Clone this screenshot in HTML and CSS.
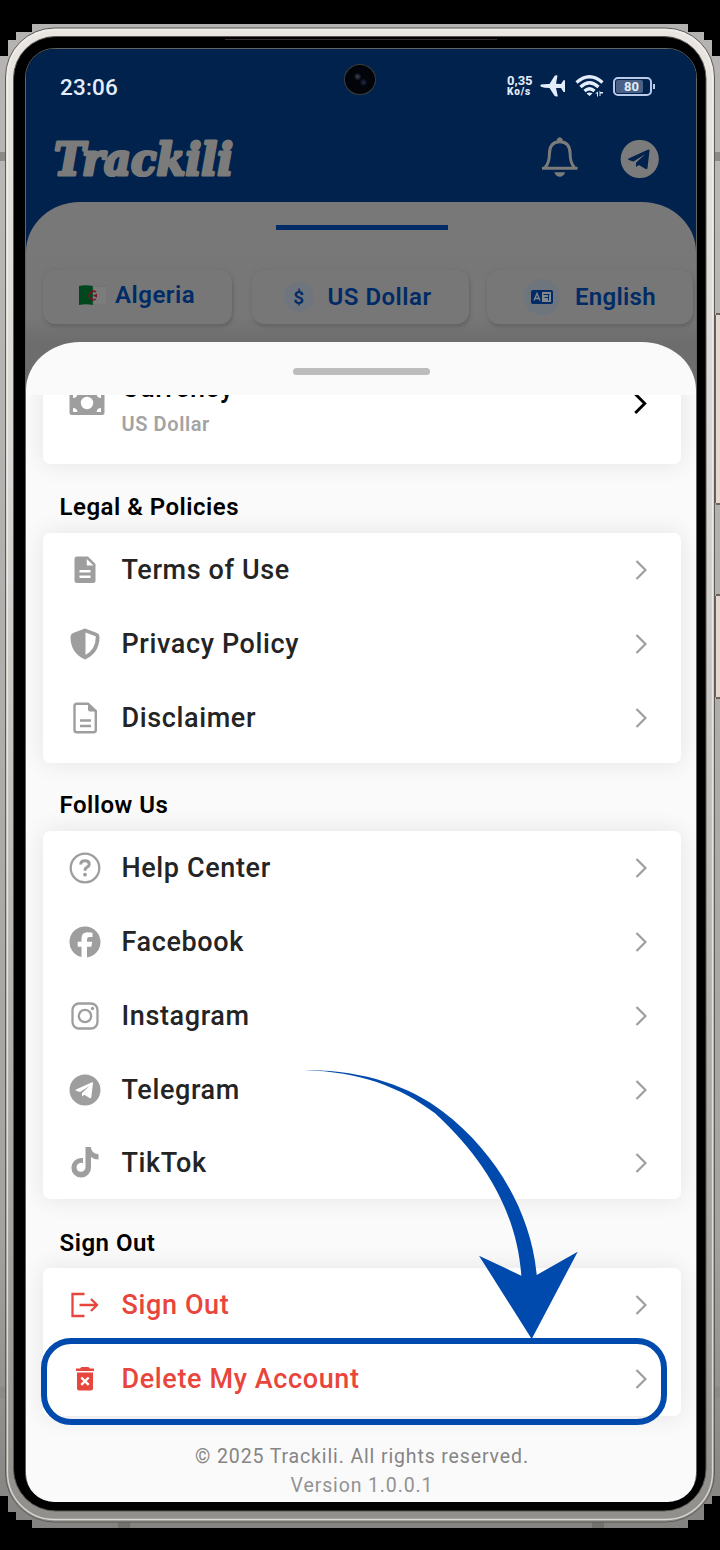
FILE: index.html
```html
<!DOCTYPE html>
<html lang="en">
<head>
<meta charset="utf-8">
<title>Trackili</title>
<link rel="stylesheet" href="styles.css">
</head>
<body>
<svg width="0" height="0" class="defs">
  <symbol id="chev" viewBox="0 0 12 20"><path d="M1.500 1l9 9-9 9" fill="none" stroke="currentColor"/></symbol>
  <symbol id="telegram" viewBox="0 0 32 32"><path fill-rule="evenodd" fill="currentColor" d="M16 .5a15.500 15.500 0 1 0 0 31a15.500 15.500 0 1 0 0-31zM24 8.800L22.300 23.300Q22 25 20.500 24L15.300 20.800L13 22.500L13 19L20.500 12L11 18L7 16.800Q5.800 16.200 7 15.500L22.500 8.500Q24 7.900 24 8.800z"/></symbol>
</svg>
<div class="stage">
  <svg class="frame" viewBox="0 0 720 1550">
    <defs>
      <linearGradient id="back" x2="0" y2="1"><stop offset="0" stop-color="#b5b3b1"/><stop offset=".12" stop-color="#bab8b6"/><stop offset=".8" stop-color="#a5a3a0"/><stop offset="1" stop-color="#858381"/></linearGradient>
      <linearGradient id="metal" x2="0" y2="1"><stop offset="0" stop-color="#e9e6e2"/><stop offset=".3" stop-color="#d8d6d2"/><stop offset="1" stop-color="#918f8b"/></linearGradient>
    </defs>
    <path fill="url(#back)" d="M32 24H688V32H704V40H712V56H720V1496H712V1504H704V1520H688V1528H32V1520H16V1512H8V1496H0V56H8V40H16V32H32z"/>
    <path fill="#8d8b87" d="M0 152h6v9H0zM714 152h6v9h-6zM0 1387h6v11H0zM714 1387h6v11h-6z"/>
    <path fill="#73716e" d="M118 1521h12v7h-12zM592 1521h12v7h-12z"/>
    <path fill="#e4d8cf" d="M716 315h4v188h-4zM716 596h4v101h-4z"/>
    <path fill="#6b625a" d="M716 313h4v2h-4zM716 503h4v2h-4zM716 594h4v2h-4zM716 697h4v2h-4zM715 315h1v188h-1zM715 596h1v101h-1z"/>
    <rect x="5.500" y="28" width="709" height="1494" rx="49" fill="url(#metal)" stroke="#5d5a57"/>
    <rect x="7.500" y="30" width="705" height="1489.500" rx="47" fill="none" stroke="#f1efec" stroke-opacity=".75" stroke-width="1.300"/>
    <rect x="13.500" y="36.500" width="692.500" height="1474.500" rx="42" fill="#000" stroke="#5b5652"/>
    <rect x="25.500" y="48.500" width="671" height="1453" rx="29" fill="none" stroke="#626562"/>
    <path d="M225 39.500h272" stroke="#382d28"/>
  </svg>
  <main class="screen">
    <header class="top">
      <div class="status">
        <span class="time">23:06</span>
        <div class="sys">
          <div class="rate"><span>0,35</span><b>Ko/s</b></div>
          <svg class="plane" viewBox="0 0 26 22"><path fill="#e3edfb" d="M1 9.500Q5 8.800 9.500 9L14.500 1Q15.500-.3 17.500.5L16 8.800L21 9L23.500 5.300H25V17H23.500L21 13L16 13L17.800 21.300Q16 22 14.500 20.800L9.500 13Q4 13 1 11.800Q-.2 10.500 1 9.500z"/></svg>
          <svg class="wifi" viewBox="0 0 30 22"><g fill="none" stroke="#e3edfb" stroke-width="3.200"><path d="M1.500 7.500Q14.500-4 27.500 7.500"/><path d="M5.500 12Q14.500 3.500 23.500 12"/><path d="M9.500 16Q14.500 11.500 19.500 16"/></g><path fill="#e3edfb" d="M11.500 18.500q3-2 6 0l-3 2.500zM20 18.500l3-2v5h-1v-3zM24.500 15.500v5.500h1v-2.500h2.500v-1.500h-2.500z"/></svg>
          <span class="batt"><i>80</i></span>
        </div>
      </div>
      <div class="brandrow">
        <svg class="logo" viewBox="0 0 184 60"><text x="2" y="46" textLength="179" lengthAdjust="spacingAndGlyphs">Trackili</text></svg>
        <svg class="bell" viewBox="0 0 36 42"><g fill="none" stroke="#7b7b7b" stroke-width="3"><path d="M0 32.500H36"/><path d="M3 32Q7.500 27 7.500 18Q7.500 5.500 18 5.500T28.500 18Q28.500 27 33 32"/></g><path fill="#7b7b7b" d="M15 5V3q3-4 6 0v2zM12.500 36.500h11q-1.500 4.500-5.500 4.500t-5.500-4.500z"/></svg>
        <svg class="tg"><use href="#telegram"/></svg>
      </div>
    </header>
    <section class="home">
      <div class="tab"></div>
      <div class="chips">
        <div class="chip c1">
          <svg class="flag" viewBox="0 0 28 20"><path fill="#00471f" d="M0 1Q7-.5 14 1V20Q7 18.500 0 20z"/><path fill="#7c7c7c" stroke="#6b6b6b" stroke-width=".5" d="M14 1q7 1 14 0v19q-7 .5-14 0z"/><path fill="none" stroke="#7d1019" stroke-width="1.500" d="M17 7a4.300 4.300 0 1 0 0 7"/><path fill="#7d1019" d="M14 10.500l4-1.800v4z"/></svg><span>Algeria</span>
        </div>
        <div class="chip c2"><span class="disc">$</span><span>US Dollar</span></div>
        <div class="chip c3"><span class="disc"><svg viewBox="0 0 22 14"><rect width="22" height="14" rx="2" fill="#002b66"/><path fill="none" stroke="#85898e" stroke-width="1.300" d="M3 10.500l3-7 3 7M4 8.500h4"/><path fill="#85898e" d="M11 2h9v10h-9z"/><path fill="none" stroke="#002b66" stroke-width="1" d="M12.500 4.500h6M17.500 4.500v3h-4M17.500 7v3.500"/></svg></span><span>English</span></div>
      </div>
    </section>
    <section class="sheet">
      <div class="grip"></div>
      <div class="scroll">
        <div class="card currency">
          <svg class="cash" viewBox="0 0 36 26"><rect x=".5" y="0" width="35" height="25" rx="2.500" fill="#9e9e9e"/><circle cx="18" cy="13" r="6.200" fill="#fff"/><path fill="#fff" d="M4 8V4h4.500Q8 8 4 8zM32 8V4h-4.500q.5 4 4.500 4zM4 18v4h4.500Q8 18 4 18zM32 18v4h-4.500q.5-4 4.500-4z"/></svg>
          <div class="words"><span class="cur">Currency</span><span class="sub">US Dollar</span></div>
          <svg class="chev dark"><use href="#chev"/></svg>
        </div>
        <h2>Legal &amp; Policies</h2>
        <div class="card legal">
          <div class="row"><svg class="ic" viewBox="0 0 32 32"><path fill="#9e9e9e" fill-rule="evenodd" d="M8 2.500H19L26.500 10V26.500Q26.500 29 24 29H8Q5.500 29 5.500 26.500V5Q5.500 2.500 8 2.500zM17.800 5V11.500H24.500zM10.500 16v2.400h11V16zM10.500 21.500v2.400h11v-2.400z"/></svg><span>Terms of Use</span><svg class="chev"><use href="#chev"/></svg></div>
          <div class="row"><svg class="ic" viewBox="0 0 32 32"><path fill="#9e9e9e" fill-rule="evenodd" d="M16 .5L28 5Q30.500 6 30.500 9Q30.500 25 16 31.500Q1.500 25 1.500 9Q1.500 6 4 5zM16.500 4.500V27Q26.800 21 26.800 9Q26.800 8.200 26 8z"/></svg><span>Privacy Policy</span><svg class="chev"><use href="#chev"/></svg></div>
          <div class="row"><svg class="ic" viewBox="0 0 32 32"><path fill="none" stroke="#9e9e9e" stroke-width="2.400" d="M19 1.700H8Q5.500 1.700 5.500 4V28Q5.500 30.300 8 30.300H24.500Q26.800 30.300 26.800 28V9zM11 18.500H22M11 24H22"/><path fill="#9e9e9e" d="M19 1L27.500 9.500H21Q19 9.500 19 7.500z"/></svg><span>Disclaimer</span><svg class="chev"><use href="#chev"/></svg></div>
        </div>
        <h2 class="follow">Follow Us</h2>
        <div class="card social">
          <div class="row"><svg class="ic" viewBox="0 0 32 32"><circle cx="16" cy="16" r="14.300" fill="none" stroke="#9e9e9e" stroke-width="2.300"/><path fill="none" stroke="#9e9e9e" stroke-width="3" d="M11.700 12.500Q11.800 8.800 16 8.800T20.300 12.300Q20.300 14 18 15.200Q16 16.300 16 18.800"/><circle cx="16" cy="22.700" r="1.900" fill="#9e9e9e"/></svg><span>Help Center</span><svg class="chev"><use href="#chev"/></svg></div>
          <div class="row"><svg class="ic" viewBox="0 0 32 32"><path fill="#9e9e9e" d="M31.500 16a15.500 15.500 0 1 0-19 15.100V20.800H8.700V15.800H12.500V12.500Q12.500 6.300 18.500 6.300Q20.800 6.300 23.500 6.800V11H20.500Q18 11 18 13.300V15.800H23.200L22.300 20.800H18V31.400A15.500 15.500 0 0 0 31.500 16z"/></svg><span>Facebook</span><svg class="chev"><use href="#chev"/></svg></div>
          <div class="row"><svg class="ic" viewBox="0 0 32 32"><g fill="none" stroke="#9e9e9e" stroke-width="2.300"><rect x="3.500" y="3.500" width="25" height="25" rx="6.500"/><circle cx="16" cy="16" r="6.200"/></g><circle cx="23.500" cy="8.500" r="1.700" fill="#9e9e9e"/></svg><span>Instagram</span><svg class="chev"><use href="#chev"/></svg></div>
          <div class="row"><svg class="ic"><use href="#telegram"/></svg><span>Telegram</span><svg class="chev"><use href="#chev"/></svg></div>
          <div class="row last"><svg class="ic" viewBox="0 0 32 32"><path fill="#9e9e9e" d="M16.500 0H21.800Q22.500 6.800 29.500 7.200V12.500Q25 12.500 22 10V20.500A9.800 9.800 0 1 1 12.500 11L14 11.100V16.300A4.500 4.500 0 1 0 16.500 20.500z"/></svg><span>TikTok</span><svg class="chev"><use href="#chev"/></svg></div>
        </div>
        <h2 class="out">Sign Out</h2>
        <div class="card danger">
          <div class="row"><svg class="ic" viewBox="0 0 32 32"><g fill="none" stroke="#e8463c" stroke-width="2.300"><path d="M15.500 5H3.500V27H15.500M10.500 16H27.500"/><path d="M22 10l6 6-6 6"/></g></svg><span>Sign Out</span><svg class="chev"><use href="#chev"/></svg></div>
          <div class="row"><svg class="ic" viewBox="0 0 32 32"><path fill="#e8463c" d="M7 5.500H11L12.500 4H19.500L21 5.500H25V8H7zM8 9.500H24V25.500Q24 27.500 22 27.500H10Q8 27.500 8 25.500z"/><path stroke="#fff" stroke-width="2.400" d="M12.300 14.500l7.400 7.400M19.700 14.500l-7.400 7.400"/></svg><span>Delete My Account</span><svg class="chev"><use href="#chev"/></svg></div>
        </div>
        <footer><p>© 2025 Trackili. All rights reserved.</p><p class="ver">Version 1.0.0.1</p></footer>
      </div>
    </section>
  </main>
  <div class="camera"></div>
  <div class="highlight"></div>
  <svg class="arrow" viewBox="300 1060 290 285"><path fill="#004aad" d="M304 1070.300C360 1069 410 1086 443 1111.700C495 1151 531 1212 536.700 1275L577.700 1251.700L531.700 1339L479 1255.700L521.300 1275.700C518 1225 495 1168 435 1113.300C400 1087 360 1071.500 304 1070.300z"/></svg>
</div>
</body>
</html>
```
FILE: styles.css
```css
* { box-sizing: border-box; }
body { margin: 0; background: #000; font-family: Roboto, "Liberation Sans", sans-serif; }
.defs { position: absolute; }
.stage { position: relative; width: 720px; height: 1550px; padding: 49px 24px 48px 26px; overflow: hidden; }
.frame { position: absolute; left: 0; top: 0; width: 720px; height: 1550px; }
.screen { position: relative; width: 670px; height: 1453px; border-radius: 28px; overflow: hidden; background: #00224d; display: flex; flex-direction: column; }
.top { height: 153px; flex: none; }
.status { height: 76px; padding: 0 40px 0 34px; display: flex; align-items: center; justify-content: space-between; color: #e3edfb; }
.time { font-size: 22.500px; font-weight: 500; letter-spacing: .2px; }
.sys { display: flex; align-items: center; height: 24px; margin-top: -2px; }
.rate { font-size: 13px; line-height: 11px; font-weight: 700; width: 26px; white-space: nowrap; }
.rate span { display: block; }
.rate b { display: block; font-size: 10px; line-height: 10px; font-weight: 900; letter-spacing: .9px; margin-top: 1px; }
.plane { width: 26px; height: 22px; margin-left: 7px; }
.wifi { width: 30px; height: 22px; margin-left: 9px; }
.batt { position: relative; width: 39px; height: 19px; margin: 0 4px 0 8px; border: 2px solid #b9cbe8; border-radius: 5px; padding: 1px; }
.batt i { display: block; width: 27px; height: 13px; background: #4a6288; font: 700 13px/13px Roboto, sans-serif; padding-left: 8px; border-radius: 2px; }
.batt::after { content: ""; position: absolute; left: 38px; top: 5px; width: 2px; height: 5px; background: #b9cbe8; }
.brandrow { display: flex; align-items: center; height: 68px; padding: 0 37px 0 26px; }
.logo { width: 184px; height: 60px; overflow: visible; }
.logo text { font: italic 700 45px "DejaVu Serif", serif; fill: #7b7b7b; stroke: #7b7b7b; stroke-width: 3.200px; stroke-linejoin: round; }
.bell { width: 36px; height: 42px; margin: -4px 0 0 306px; }
.tg { width: 40px; height: 40px; margin-left: 42px; color: #7b7b7b; }
.home { height: 200px; flex: none; background: linear-gradient(#787878 0, #777 115px, #6d6d6d 140px); border-radius: 54px 54px 0 0 / 50px 50px 0 0; padding-top: 23px; }
.tab { width: 172px; height: 5px; margin-left: 249.500px; background: #002b66; }
.chips { display: flex; margin: 40px 0 0 17px; }
.chip { height: 54px; flex: none; border-radius: 12px; background: #777; box-shadow: 1px 3px 3px #656565, 0 -1px 5px #717171; display: flex; align-items: center; color: #002b66; font-weight: 600; font-size: 24px; letter-spacing: .5px; }
.c1 { width: 189px; padding-left: 36px; padding-bottom: 4px; }
.c2 { width: 217px; margin-left: 20px; padding-left: 32px; }
.c3 { width: 206px; margin-left: 18px; padding-left: 37px; letter-spacing: .3px; }
.flag { width: 28px; height: 20px; margin-right: 8px; }
.disc { width: 30px; height: 30px; border-radius: 50%; background: #6f757c; display: flex; align-items: center; justify-content: center; font-size: 19px; margin-right: 13.500px; }
.c3 .disc { width: 36px; height: 36px; margin-right: 15px; }
.disc svg { width: 22px; height: 14px; }
.sheet { height: 1161px; margin-top: -60px; flex: none; background: #fafafa; border-radius: 54px 54px 0 0 / 48px 48px 0 0; padding-top: 26px; display: flex; flex-direction: column; }
.grip { width: 137px; height: 7px; border-radius: 4px; background: #bcbcbc; margin-left: 267px; flex: none; }
.scroll { height: 1108px; margin-top: 20px; overflow: hidden; padding: 0 15.500px 0 16.500px; flex: none; }
.card { background: #fff; border-radius: 7px; box-shadow: 0 0 24px rgba(0,0,0,.09); }
.currency { height: 95px; margin-top: -26px; padding-left: 26.500px; display: flex; }
.cash { width: 36px; height: 26px; margin-top: 21px; }
.words { margin-left: 16.500px; padding-top: 3px; display: flex; flex-direction: column; }
.cur { font-size: 27px; line-height: 32px; font-weight: 500; letter-spacing: .5px; }
.sub { font-size: 20px; line-height: 24px; font-weight: 600; color: #a3a3a3; letter-spacing: .6px; margin-top: 8px; }
.chev { width: 12px; height: 20px; color: #9e9e9e; margin-left: auto; stroke-width: 2.200px; }
.currency .dark { color: #000; margin: 24px 33.500px 0 auto; width: 14px; height: 21px; stroke-width: 2.800px; }
h2 { margin: 0; height: 69px; padding: 27px 0 0 17px; font-size: 24px; line-height: 32px; font-weight: 600; color: #000; letter-spacing: .5px; }
h2.follow { height: 68px; padding-top: 26px; }
h2.out { padding-top: 28px; }
.row { height: 74px; display: flex; align-items: center; padding: 0 33.500px 1px 26.500px; font-size: 27px; font-weight: 500; color: #242424; letter-spacing: .62px; }
.row.last { height: 72px; }
.legal { height: 230px; }
.ic { width: 32px; height: 32px; margin-right: 20.500px; color: #9e9e9e; flex: none; }
.danger .row > span { color: #e8463c; }
.danger .row { padding-bottom: 0; }
footer { padding-top: 26px; text-align: center; font-size: 19.500px; line-height: 29px; color: #858585; letter-spacing: .87px; }
footer p { margin: 0 0 0 1px; }
.ver { color: #929292; }
.camera { position: absolute; left: 344px; top: 64px; width: 32px; height: 31px; border-radius: 50%; border: 1px solid #39413c; background: radial-gradient(circle at 42% 40%, #3d455c 0, transparent 4px), radial-gradient(circle at 62% 60%, #232a4c 0, transparent 4px), #020409; }
.highlight { position: absolute; left: 41px; top: 1337.500px; width: 626px; height: 87px; border: 6px solid #004aad; border-radius: 30px; }
.arrow { position: absolute; left: 300px; top: 1060px; width: 290px; height: 285px; }
```
